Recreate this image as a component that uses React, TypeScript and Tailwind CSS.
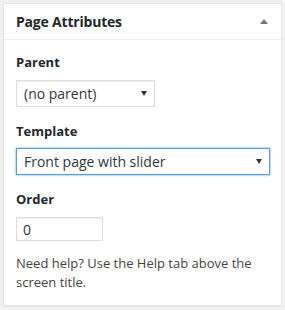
import React from 'react';

const font = { fontFamily: '"Open Sans", "Noto Sans", sans-serif' };

function Arrow() {
  return (
    <svg width="6" height="5" viewBox="0 0 6 5" className="shrink-0">
      <path d="M0 0 H6 L3 5 Z" fill="#32373c" />
    </svg>
  );
}

export default function App() {
  return (
    <div className="w-[285px] h-[310px] bg-[#f1f1f1] pt-[3px] px-[3px]" style={font}>
      <div className="w-[279px] h-[303px] bg-white border border-[#e5e5e5] shadow-[0_1px_1px_rgba(0,0,0,0.04)] text-[#23282d]">
        <div className="h-[36px] flex items-center justify-between pl-[12px] pr-[13px] border-b border-[#eeeeee]">
          <h2 className="text-[14px] font-bold tracking-[-0.2px]">Page Attributes</h2>
          <svg width="8" height="5" viewBox="0 0 8 5">
            <path d="M0 5 L4 0 L8 5 Z" fill="#72777c" />
          </svg>
        </div>
        <div className="pl-[12px] pr-[11px]">
          <p className="mt-[12px] h-[20px] text-[13px] font-bold leading-[20px]">Parent</p>
          <div className="mt-[8px] w-[139px] h-[27px] border border-[#dddddd] shadow-[inset_0_1px_2px_rgba(0,0,0,0.07)] flex items-center justify-between pl-[7px] pr-[7px] text-[14px] text-[#32373c]">
            <span>(no parent)</span>
            <Arrow />
          </div>
          <p className="mt-[14px] h-[20px] text-[13px] font-bold leading-[20px]">Template</p>
          <div className="mt-[7px] w-[254px] h-[27px] border border-[#5b9dd9] shadow-[0_0_2px_rgba(30,140,190,0.8)] flex items-center justify-between pl-[7px] pr-[7px] text-[14px] text-[#32373c]">
            <span>Front page with slider</span>
            <Arrow />
          </div>
          <p className="mt-[14px] h-[20px] text-[13px] font-bold leading-[20px]">Order</p>
          <div className="mt-[8px] w-[87px] h-[24px] border border-[#dddddd] shadow-[inset_0_1px_2px_rgba(0,0,0,0.07)] flex items-center pl-[6px] text-[14px] text-[#32373c]">
            0
          </div>
          <p className="mt-[13px] text-[13px] leading-[19px] text-[#444444]">
            Need help? Use the Help tab above the screen title.
          </p>
        </div>
      </div>
    </div>
  );
}
